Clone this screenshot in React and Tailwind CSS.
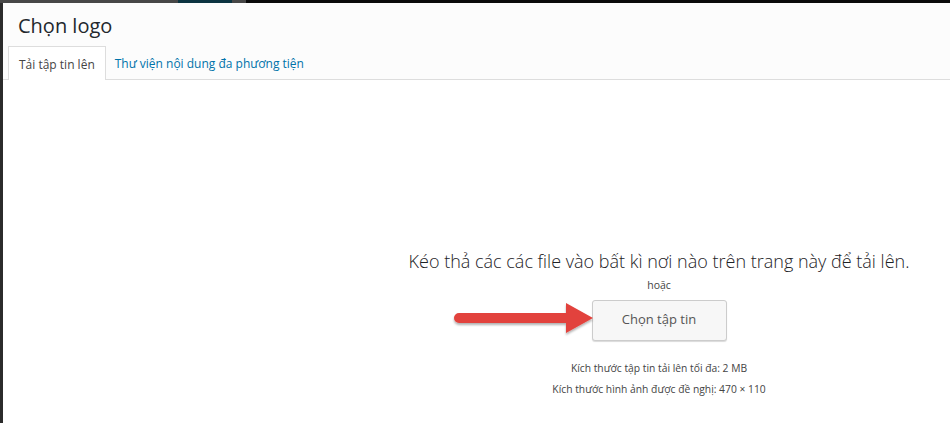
import React from 'react';

// Mũi tên đỏ chỉ vào nút chọn tập tin
const RedArrow = () => (
  <svg width="144" height="42" viewBox="0 0 144 42" className="absolute left-[-140px] top-0 overflow-visible">
    <defs>
      <filter id="sh" x="-10%" y="-30%" width="120%" height="170%">
        <feDropShadow dx="0" dy="2" stdDeviation="1.3" floodColor="#000" floodOpacity="0.3" />
      </filter>
    </defs>
    <path filter="url(#sh)" d="M7 13 L114 13 L114 3 L141 18 L114 33 L114 23 L7 23 A5 5 0 0 1 7 13 Z" fill="#e2433d" />
  </svg>
);

export default function App() {
  return (
    <div className="w-[950px] h-[423px] overflow-hidden bg-[#2b2b2b] relative" style={{ fontFamily: '"Open Sans", "Noto Sans", sans-serif' }}>
      {/* dải nền phía trên */}
      <div className="flex h-[3px]">
        <div className="w-[178px] bg-[#474747]" />
        <div className="w-[54px] bg-[#0c3441]" />
        <div className="w-[14px] bg-[#474747]" />
        <div className="flex-1 bg-[#0a0a0a]" />
      </div>
      <div className="ml-[3px] w-[1312px] h-[420px] bg-white flex flex-col">
        <div className="bg-[#fcfcfc] border-b border-[#dddddd] h-[77px] flex flex-col">
          <h1 className="text-[20px] leading-none text-[#23282d] pl-[15px] pt-[13px] h-[44px]">Chọn logo</h1>
          <div className="flex items-end pl-[5px] h-[33px]">
            <div className="px-[10px] pt-[2px] border border-[#dddddd] border-b-0 bg-white text-[12px] text-[#444] flex items-center -mb-px relative z-10 h-[34px]">
              Tải tập tin lên
            </div>
            <div className="h-[33px] px-[9px] pt-[2px] text-[12px] text-[#0073aa] flex items-center">
              Thư viện nội dung đa phương tiện
            </div>
          </div>
        </div>
        <div className="flex-1 flex flex-col items-center pt-[172px]">
          <p className="text-[18px] leading-none font-light text-[#1d2226]">Kéo thả các các file vào bất kì nơi nào trên trang này để tải lên.</p>
          <p className="text-[10.5px] text-[#444] mt-[10px] leading-none">hoặc</p>
          <div className="relative mt-[9px]">
            <RedArrow />
            <button className="w-[135px] h-[41px] bg-[#f7f7f7] border border-[#cccccc] rounded-[3px] shadow-[0_1px_1px_rgba(0,0,0,0.15)] text-[13px] text-[#555]">
              Chọn tập tin
            </button>
          </div>
          <p className="text-[10.3px] text-[#444] mt-[22px] leading-none">Kích thước tập tin tải lên tối đa: 2 MB</p>
          <p className="text-[10.3px] text-[#444] mt-[11px] leading-none">Kích thước hình ảnh được đề nghị: 470 × 110</p>
        </div>
      </div>
    </div>
  );
}
